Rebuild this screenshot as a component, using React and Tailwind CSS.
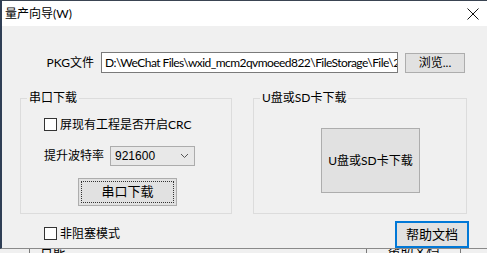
import React from "react";

const font = { fontFamily: 'Lato, "Noto Sans CJK SC", sans-serif' };

const Checkbox = ({ label }) => (
    <label className="flex items-center gap-[3px] text-[12px] leading-none text-black">
        <span className="w-[13px] h-[13px] border border-[#333333] bg-white shrink-0" />
        <span>{label}</span>
    </label>
);

const GroupBox = ({ title, className = "", children }) => (
    <div className={`relative border border-[#dcdcdc] ${className}`}>
        <span className="absolute left-[6px] -top-[9px] px-[2px] bg-[#f0f0f0] text-[12px] leading-[16px] text-black">
            {title}
        </span>
        {children}
    </div>
);

export default function App() {
    return (
        <div className="w-[487px] h-[253px] overflow-hidden bg-[#f0f0f0] flex flex-col" style={font}>
            {/* window */}
            <div className="h-[249px] flex flex-col shrink-0 border-t border-[#3a4452] border-l-2 border-l-[#2f3e55] border-b border-b-[#8a8a8a]">
                {/* title bar */}
                <div className="h-[25px] bg-white flex items-center justify-between pl-[3px] pr-[8px] shrink-0">
                    <span className="text-[12px] text-black">量产向导(W)</span>
                    <svg width="12" height="12" viewBox="0 0 12 12">
                        <path d="M0.5 0.5 L11.5 11.5 M11.5 0.5 L0.5 11.5" stroke="#111" strokeWidth="1" />
                    </svg>
                </div>

                {/* body */}
                <div className="flex-1 flex flex-col">
                    {/* PKG row */}
                    <div className="flex items-center mt-[26px] h-[21px]">
                        <span className="w-[92px] text-right text-[12px] text-black">PKG文件</span>
                        <div className="ml-[7px] w-[297px] h-[21px] shrink-0 bg-white border border-[#7a7a7a] overflow-hidden whitespace-nowrap pl-[3px] text-[12px] tracking-[-0.55px] leading-[19px] text-black">
                            D:\WeChat Files\wxid_mcm2qvmoeed822\FileStorage\File\20
                        </div>
                        <button className="ml-[7px] w-[60px] h-[20px] shrink-0 bg-[#e1e1e1] border border-[#adadad] text-[12px] leading-none text-black">
                            浏览...
                        </button>
                    </div>

                    {/* group boxes */}
                    <div className="flex mt-[25px] ml-[18px] gap-[21px]">
                        <GroupBox title="串口下载" className="w-[212px] h-[116px]">
                            <div className="pl-[23px] pt-[19px] flex flex-col items-start">
                                <Checkbox label="屏现有工程是否开启CRC" />
                                <div className="flex items-center mt-[15px]">
                                    <span className="text-[12px] text-black">提升波特率</span>
                                    <div className="ml-[6px] w-[85px] h-[20px] bg-[#e8e8e8] border border-[#acacac] flex items-center justify-between pl-[4px] pr-[5px]">
                                        <span className="text-[12px] text-black leading-none" style={{ fontFamily: '"Liberation Sans", Arial, sans-serif' }}>921600</span>
                                        <svg width="9" height="6" viewBox="0 0 9 6">
                                            <path d="M1 1 L4.5 4.5 L8 1" stroke="#555" strokeWidth="1" fill="none" />
                                        </svg>
                                    </div>
                                </div>
                                <button className="ml-[34px] mt-[12px] w-[99px] h-[28px] bg-[#e1e1e1] border border-[#adadad] p-[2px]">
                                    <span className="w-full h-full border border-dotted border-[#333] flex items-center justify-center text-[13px] text-black">
                                        串口下载
                                    </span>
                                </button>
                            </div>
                        </GroupBox>

                        <GroupBox title="U盘或SD卡下载" className="w-[214px] h-[116px]">
                            <div className="flex pl-[67px] pt-[29px]">
                                <button className="w-[99px] h-[65px] bg-[#e1e1e1] border border-[#adadad] text-[12px] text-black">
                                    U盘或SD卡下载
                                </button>
                            </div>
                        </GroupBox>
                    </div>

                    {/* bottom row */}
                    <div className="flex items-start justify-between mt-[7px] pl-[42px] pr-[18px]">
                        <div className="mt-[6px]">
                            <Checkbox label="非阻塞模式" />
                        </div>
                        <button className="w-[74px] h-[27px] bg-[#e1e1e1] border-2 border-[#0078d7] text-[13px] text-black">
                            帮助文档
                        </button>
                    </div>
                </div>
            </div>

            {/* window underneath */}
            <div className="flex-1 overflow-hidden bg-[#f0f0f0]">
                <div className="flex h-full">
                    <div className="w-[30px] border-r border-[#7a7a7a]" />
                    <span className="ml-[10px] -mt-[9px] text-[13px] text-black">日能</span>
                    <div className="ml-[300px] w-[95px] border-l border-r border-[#7a7a7a] flex justify-center">
                        <span className="-mt-[9px] text-[13px] text-black">帮助文档</span>
                    </div>
                </div>
            </div>
        </div>
    );
}
